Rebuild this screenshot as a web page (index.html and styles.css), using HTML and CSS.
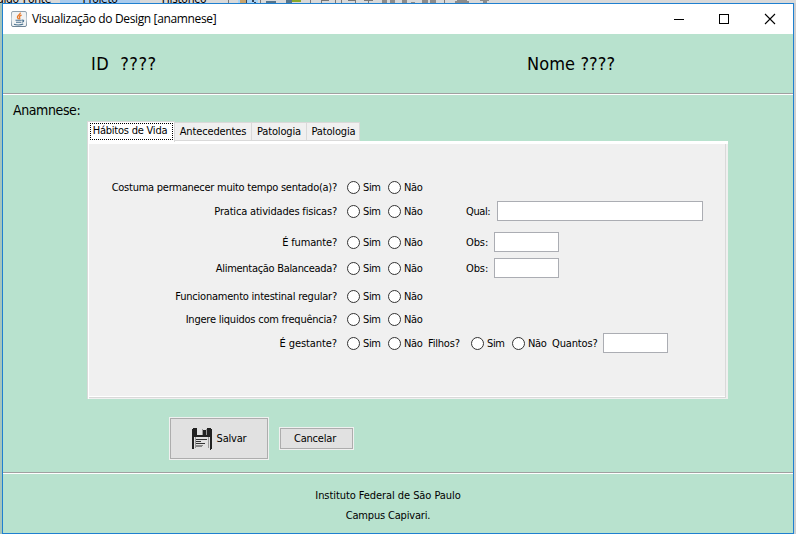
FILE: index.html
```html
<!DOCTYPE html>
<html lang="pt-BR">
<head>
<meta charset="utf-8">
<title>Visualização do Design [anamnese]</title>
<link rel="stylesheet" href="styles.css">
</head>
<body>
<div class="desktop">
  <div class="ide">
    <span class="ide-tab source">Código-Fonte</span><span class="ide-tab project">Projeto</span><span class="ide-tab history">Histórico</span>
    <svg class="ide-tools" width="300" height="3" viewBox="228 0 300 3" shape-rendering="crispEdges"><path fill="#777" d="M228 0h1v3h-1zM260 0h1v3h-1zM310 0h1v3h-1zM444 0h1v3h-1zM321 0h8v1h-8zM321 0h1v3h-1zM335 0h1v3h-1zM341 0h1v3h-1zM348 0h8v1h-8zM355 0h1v3h-1zM364 0h9v1h-9zM368 0h1v3h-1z"/><path fill="#8b8b8b" d="M382 0h5v3h-5zM390 0h5v3h-5zM402 0h5v3h-5zM411 2h4v1h-4zM422 0h6v3h-6zM430 0h6v3h-6zM455 1h14v2h-14zM457 0h10v1h-10zM480 0h9v1h-9zM483 1h4v2h-4z"/><path fill="#a9d3f4" d="M238 0h20v3h-20z"/><path fill="#c9a36a" d="M240 0h6v3h-6z"/><path fill="#33445c" d="M246 0h1v3h-1zM252 0h2v2h-2zM254 2h2v1h-2z"/><path fill="#54748c" d="M266 1h10v2h-10zM286 0h6v3h-6z"/><path fill="#8aa82a" d="M292 0h9v2h-9z"/></svg>
  </div>
  <div class="window">
    <header class="titlebar">
      <svg class="java" width="16" height="16" viewBox="0 0 16 16"><defs><linearGradient id="jg" x2="0" y2="1"><stop stop-color="#8fa0ad"/><stop offset=".5" stop-color="#c5d0d8"/><stop offset="1" stop-color="#6d8496"/></linearGradient></defs><rect x=".5" y=".5" width="15" height="15" rx="1.5" fill="#f1f3f4" stroke="url(#jg)"/><path d="M9.3 1.6C9.8 3.5 6 4.3 6.400 6.100c.1.9 1 1.500 1.300 2.200M10.600 4.200C8.700 4.800 7.900 5.600 8.700 6.700c.4.6.1 1.100-.4 1.600" fill="none" stroke="#e8792b" stroke-width="1.3"/><path d="M4.500 9.300h6.200M5 11.200h5.400M3 13.200c2 1 7 1 9.200-.1M11 9.200c2.300-.5 2.200 1.500.1 2" fill="none" stroke="#49718f" stroke-width="1.1"/></svg>
      <h1 class="title">Visualização do Design [anamnese]</h1>
      <svg class="controls" width="101" height="12" viewBox="0 0 101 12" fill="none" stroke="#000"><path d="M0 6.500h10M45.500 1.500h9v9h-9z" shape-rendering="crispEdges"/><path d="M91 1l10 10M101 1l-10 10" stroke-width="1.1"/></svg>
    </header>
    <section class="patient"><span class="patient-id">ID&nbsp; ????</span><span class="patient-name">Nome ????</span></section>
    <main class="body">
      <h2 class="heading">Anamnese:</h2>
      <nav class="tabs"><span class="tab active"><span class="focus">Hábitos de Vida</span></span><span class="tab t2">Antecedentes</span><span class="tab t3">Patologia</span><span class="tab t4">Patologia</span></nav>
      <div class="panel">
        <div class="row r1"><span class="question q1">Costuma permanecer muito tempo sentado(a)?</span><label class="option"><i class="radio"></i><span>Sim</span></label><label class="option"><i class="radio"></i><span>Não</span></label></div>
        <div class="row r2"><span class="question q2">Pratica atividades fisicas?</span><label class="option"><i class="radio"></i><span>Sim</span></label><label class="option"><i class="radio"></i><span>Não</span></label><span class="note qual">Qual:</span><i class="field wide"></i></div>
        <div class="row r3"><span class="question q3">É fumante?</span><label class="option"><i class="radio"></i><span>Sim</span></label><label class="option"><i class="radio"></i><span>Não</span></label><span class="note">Obs:</span><i class="field"></i></div>
        <div class="row r4"><span class="question q4">Alimentação Balanceada?</span><label class="option"><i class="radio"></i><span>Sim</span></label><label class="option"><i class="radio"></i><span>Não</span></label><span class="note">Obs:</span><i class="field"></i></div>
        <div class="row r5"><span class="question q5">Funcionamento intestinal regular?</span><label class="option"><i class="radio"></i><span>Sim</span></label><label class="option"><i class="radio"></i><span>Não</span></label></div>
        <div class="row r6"><span class="question q6">Ingere liquidos com frequência?</span><label class="option"><i class="radio"></i><span>Sim</span></label><label class="option"><i class="radio"></i><span>Não</span></label></div>
        <div class="row r7"><span class="question q7">É gestante?</span><label class="option"><i class="radio"></i><span>Sim</span></label><label class="option"><i class="radio"></i><span>Não</span></label><span class="children">Filhos?</span><label class="option"><i class="radio"></i><span>Sim</span></label><label class="option"><i class="radio"></i><span>Não</span></label><span class="count">Quantos?</span><i class="field"></i></div>
      </div>
      <div class="actions">
        <button class="button save"><svg width="20" height="22" viewBox="0 0 20 22" shape-rendering="crispEdges"><path fill="#222" d="M0 1h1V0h4v7h10V0h4v1h1v20h-1v1h-1V9H2v12H0zM11 2h3v5h-3z"/><path fill="#999" d="M10 1h1v6h-1zM14 1h1v6h-1zM3 9h1v11H3zM16 9h1v11h-1z"/><path fill="#333" d="M4 11h11v1H4zM4 13h5v1H4zM4 15h9v1H4z"/><path fill="#888" d="M4 17h7v1H4zM4 18h6v1H4z"/></svg><span>Salvar</span></button>
        <button class="button cancel">Cancelar</button>
      </div>
    </main>
    <footer class="footer"><p class="school">Instituto Federal de São Paulo</p><p class="campus">Campus Capivari.</p></footer>
  </div>
</div>
</body>
</html>
```
FILE: styles.css
```css
* { box-sizing: border-box; }
body { margin: 0; background: #fff; color: #000; font: 11px/14px "DejaVu Sans Condensed", "DejaVu Sans", sans-serif; font-stretch: condensed; letter-spacing: -.35px; }
.desktop { width: 796px; height: 534px; padding: 3px 2px 0; background: linear-gradient(90deg, #a5c5bc 2px, #cdcfd1 2px); position: relative; }
.ide { position: absolute; inset: 0 0 auto; height: 3px; overflow: hidden; background: #d9d9d9; display: flex; font-size: 12px; line-height: 12px; white-space: nowrap; }
.ide-tab { height: 12px; margin-top: -7px; text-align: center; flex: none; }
.source { width: 60px; display: flex; justify-content: flex-end; padding-right: 9px; }
.project { width: 80px; background: #a9cbed; }
.history { width: 88px; }
.ide-tools { flex: none; }
.window { width: 792px; height: 531px; border: 1px solid #1f80d0; background: #b8e2ce; display: flex; flex-direction: column; white-space: nowrap; }
.titlebar { height: 30px; flex: none; background: #fff; display: flex; align-items: center; padding: 0 18px 1px 8px; }
.title { margin: 0 0 0 5px; font: 12px/16px "Open Sans", "Noto Sans", sans-serif; letter-spacing: -.36px; flex: 1; }
.controls { overflow: visible; }
.patient { height: 61px; flex: none; border-bottom: 1px solid #fff; box-shadow: inset 0 -1px #a0a0a0; font-size: 18px; line-height: 22px; padding: 19px 0 0 88px; display: flex; letter-spacing: .1px; }
.patient-id { width: 436px; letter-spacing: .45px; }
.body { height: 379px; flex: none; box-shadow: inset 0 -1px #fff, inset 0 -2px #a0a0a0; }
.heading { margin: 0; height: 26px; padding: 6px 0 0 10px; font-size: 14px; line-height: 18px; font-weight: 400; letter-spacing: -.4px; }
.tabs { display: flex; align-items: flex-end; height: 20px; margin-left: 84px; letter-spacing: -.15px; }
.tab { height: 19px; border: 1px solid #d9d9d9; border-left: 0; background: #f0f0f0; text-align: center; line-height: 18px; }
.active { width: 88px; height: 21px; margin-bottom: -1px; background: #fff; border-left: 1px solid #d9d9d9; border-bottom: 0; padding: 1px 1px 0 2px; line-height: 13px; letter-spacing: -.22px; }
.focus { display: block; height: 17px; border: 1px dotted #000; padding-right: 3px; }
.t2 { width: 77px; }
.t3 { width: 55px; }
.t4 { width: 53px; padding-left: 1px; }
.panel { margin-left: 84px; width: 641px; height: 258px; background: #f0f0f0; border-left: 1px solid #d9d9d9; box-shadow: inset 1px 3px #fff, inset -2px -1px #f0f0f0, inset -3px -2px #d9d9d9, inset 0 -3px #fff; padding-top: 36px; }
.row { display: flex; align-items: center; height: 20px; }
.question, .option span, .note, .children, .count { padding-top: 1px; line-height: 15px; }
.question { width: 249px; text-align: right; margin-right: 10px; }
.q1 { letter-spacing: -.25px; }
.q2 { letter-spacing: -.18px; }
.q3 { letter-spacing: -.15px; }
.q4 { letter-spacing: -.3px; }
.q5 { letter-spacing: -.22px; }
.q6 { letter-spacing: -.22px; }
.q7 { letter-spacing: -.08px; }
.option { width: 41px; display: flex; align-items: center; flex: none; }
.radio { width: 13px; height: 13px; border: 1px solid #333; border-radius: 50%; background: #fff; margin-right: 3px; }
.note { width: 28px; margin-left: 37px; letter-spacing: -.1px; }
.qual { width: 31px; letter-spacing: -.4px; }
.field { width: 65px; height: 20px; border: 1px solid #abadb3; background: #fff; }
.wide { width: 206px; }
.children { width: 43px; margin-left: -1px; letter-spacing: -.2px; }
.count { width: 51px; margin-left: -1px; letter-spacing: -.15px; }
.r2 { margin-top: 4px; }
.r3 { margin-top: 11px; }
.r4 { margin-top: 6px; }
.r5 { margin-top: 8px; }
.r6 { margin-top: 3px; }
.r7 { margin-top: 4px; }
.actions { display: flex; align-items: center; gap: 10px; padding: 18px 0 0 166px; }
.button { font: inherit; letter-spacing: -.2px; color: #000; background: #e1e1e1; border: 1px solid #f0f0f0; box-shadow: inset 0 0 0 1px #adadad; display: flex; align-items: center; justify-content: center; padding: 0; }
.save { width: 100px; height: 43px; gap: 5px; }
.cancel { width: 75px; height: 23px; padding-right: 3px; }
.footer { text-align: center; padding: 15px 20px 0 0; }
.footer p { margin: 0 0 6px; }
.school { letter-spacing: -.07px; }
.campus { letter-spacing: -.18px; }
```
